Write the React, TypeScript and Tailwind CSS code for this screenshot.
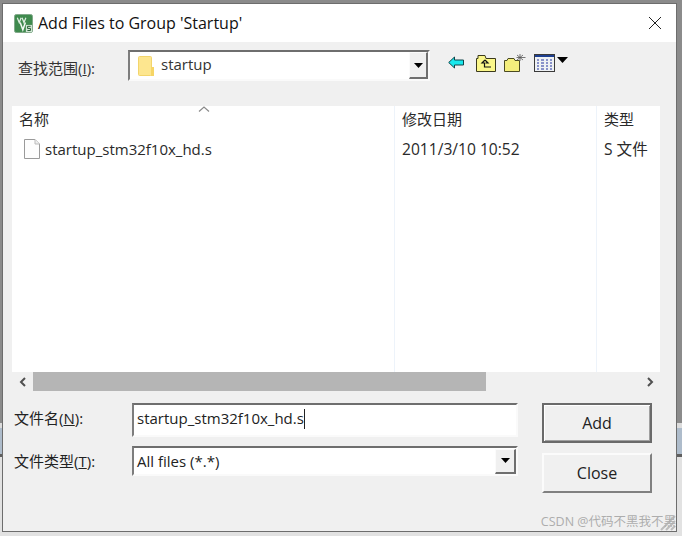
import React from "react";

const ui = "font-['Open_Sans','Noto_Sans_CJK_SC',sans-serif]";

function Logo() {
  return (
    <svg width="19" height="19" viewBox="0 0 20 20" className="shrink-0">
      <rect x="0.5" y="0.5" width="19" height="19" rx="2" fill="#3f8a4e" stroke="#7fa888" />
      <path d="M3.5 4l2 5 2-5M8.5 4l2 5 2-5" stroke="#dfeee2" strokeWidth="1.3" fill="none" />
      <path d="M6.5 9l2.8 7.5L12 9" stroke="#f2f8f3" strokeWidth="1.6" fill="none" />
      <rect x="12.5" y="11.5" width="6.5" height="7.5" fill="#cfe3d3" />
      <path d="M17.5 13h-3.2v2.2h3v2.2h-3.2" stroke="#1f5a2c" strokeWidth="1" fill="none" />
    </svg>
  );
}

function Triangle({ w = 9, h = 5 }: { w?: number; h?: number }) {
  return (
    <svg width={w} height={h} viewBox={`0 0 ${w} ${h}`}>
      <path d={`M0 0H${w}L${w / 2} ${h}Z`} fill="#000" />
    </svg>
  );
}

function Sunken({ className, children }: { className: string; children?: React.ReactNode }) {
  return (
    <div className={`border-2 border-t-[#6e6e6e] border-l-[#7d7d7d] border-r-[#fafafa] border-b-[#fafafa] bg-white ${className}`}>
      {children}
    </div>
  );
}

function DropButton({ className }: { className: string }) {
  return (
    <div className={`flex items-center justify-center bg-[#f0f0f0] border border-t-[#fbfbfb] border-l-[#fbfbfb] border-r-[#6f6f6f] border-b-[#6f6f6f] border-r-2 border-b-2 ${className}`}>
      <Triangle />
    </div>
  );
}

function Toolbar() {
  return (
    <div className="flex items-center ml-[18px] h-[24px] mt-[-6px]">
      <svg width="16" height="13" viewBox="0 0 16 13" className="mr-[12px]">
        <path d="M0.7 6.5L6.5 1V4H15.5V9H6.5V12Z" fill="#18e8ec" stroke="#10454a" strokeWidth="1" />
      </svg>
      <svg width="20" height="18" viewBox="0 0 20 18" className="mr-[8px]">
        <path d="M0.5 4.5H2V1.5H9L10 4.5H19.5V17.5H0.5Z" fill="#fbf78a" stroke="#3b3a1c" />
        <path d="M9 6L6 9H8.5V13H15M9 6l3 3H9.5" stroke="#111" strokeWidth="1.2" fill="none" />
      </svg>
      <svg width="22" height="18" viewBox="0 0 22 18" className="mr-[8px]">
        <path d="M0.5 6.5H3L4 4.5H10L11 6.5H15.5V17.5H0.5Z" fill="#f4ee7c" stroke="#4a4a22" />
        <path d="M16 0V7M12.5 3.5H21.5M13 1l6 5M19 1l-6 5" stroke="#555" strokeWidth="0.8" />
      </svg>
      <svg width="21" height="18" viewBox="0 0 21 18" className="mr-[2px]">
        <rect x="0.5" y="0.5" width="20" height="17" fill="#eef1f4" stroke="#3a3a3a" />
        <rect x="1" y="1" width="19" height="2" fill="#1d3f90" />
        <path d="M3 6h2M7 6h3M12 6h2M16 6h2M3 9h2M7 9h3M12 9h2M16 9h2M3 12h2M7 12h3M12 12h2M16 12h2M3 15h2M7 15h3M12 15h2M16 15h2" stroke="#2335a0" strokeWidth="1.2" />
      </svg>
      <div className="mb-[5px]">
        <Triangle w={11} h={6} />
      </div>
    </div>
  );
}

function FileList() {
  const sep = "w-px shrink-0 bg-[#edf3fa]";
  return (
    <div className="mx-[8px] mt-[25px] w-[648px] h-[266px] bg-white flex text-[15px] text-[#2a2a2a] relative overflow-hidden">
      <div className="w-[382px] pl-[7px] pt-[2px]">
        <div className="h-[22px] leading-[22px]">名称</div>
        <div className="flex items-center gap-[5px] mt-[9px] pl-[5px] h-[20px]">
          <svg width="16" height="20" viewBox="0 0 16 20">
            <path d="M0.5 0.5H11L15.5 5V19.5H0.5Z" fill="#fdfdfd" stroke="#9a9a9a" />
            <path d="M11 0.5V5H15.5" fill="#eee" stroke="#bbb" />
          </svg>
          <span>startup_stm32f10x_hd.s</span>
        </div>
      </div>
      <div className={sep} />
      <div className="w-[201px] pl-[7px] pt-[2px]">
        <div className="h-[22px] leading-[22px]">修改日期</div>
        <div className="mt-[9px] h-[20px] leading-[20px] text-[15.6px]">2011/3/10 10:52</div>
      </div>
      <div className={sep} />
      <div className="flex-1 pl-[7px] pt-[2px]">
        <div className="h-[22px] leading-[22px]">类型</div>
        <div className="mt-[9px] h-[20px] leading-[20px] text-[15.6px]">S 文件</div>
      </div>
      <svg width="12" height="6" viewBox="0 0 12 6" className="absolute left-[186px] top-0">
        <path d="M1 5.5L6 1L11 5.5" stroke="#8a8a8a" strokeWidth="1.2" fill="none" />
      </svg>
    </div>
  );
}

function ScrollBar() {
  return (
    <div className="mx-[8px] w-[648px] h-[19px] flex items-center">
      <div className="w-[21px] flex justify-center">
        <svg width="8" height="10" viewBox="0 0 8 10">
          <path d="M6 1L2 5L6 9" stroke="#505050" strokeWidth="2" fill="none" />
        </svg>
      </div>
      <div className="w-[453px] h-[19px] bg-[#b5b5b5]" />
      <div className="flex-1" />
      <div className="w-[21px] flex justify-center">
        <svg width="8" height="10" viewBox="0 0 8 10">
          <path d="M2 1L6 5L2 9" stroke="#505050" strokeWidth="2" fill="none" />
        </svg>
      </div>
    </div>
  );
}

function Form() {
  return (
    <div className="flex mt-[12px] ml-[10px]">
      <div className="w-[118px] text-[15px] text-[#222]">
        <div className="h-[34px] leading-[30px]">
          文件名(<span className="underline">N</span>):
        </div>
        <div className="h-[30px] mt-[9px] leading-[30px]">
          文件类型(<span className="underline">T</span>):
        </div>
      </div>
      <div className="w-[386px] text-[15px] text-[#222]">
        <Sunken className="h-[34px] pl-[3px] flex items-center">
          <span className="mb-[4px]">startup_stm32f10x_hd.s</span>
          <span className="w-px h-[20px] mb-[2px] bg-[#222]" />
        </Sunken>
        <Sunken className="h-[30px] mt-[9px] pl-[3px] flex items-center justify-between">
          <span className="leading-[24px]">All files (*.*)</span>
          <DropButton className="w-[21px] h-[25px]" />
        </Sunken>
      </div>
      <div className="ml-[24px] w-[110px] text-[16px] text-[#222]">
        <button className="w-full h-[40px] flex items-center justify-center bg-[#f0f0f0] border-2 border-[#6a6a6a] shadow-[inset_1px_1px_0_#ffffff,inset_-1px_-1px_0_#a0a0a0]">
          Add
        </button>
        <button className="w-full h-[40px] mt-[10px] flex items-center justify-center bg-[#f0f0f0] border-2 border-t-[#fbfbfb] border-l-[#fbfbfb] border-r-[#808080] border-b-[#808080]">
          Close
        </button>
      </div>
    </div>
  );
}

function Dialog() {
  return (
    <div className={`w-[675px] h-[529px] border border-[#6d6d6d] pl-px bg-[#f0f0f0] flex flex-col relative overflow-hidden ${ui}`}>
      <div className="h-[38px] -ml-px bg-white flex items-center pl-[11px] pr-[14px] shrink-0">
        <Logo />
        <div className="ml-[5px] text-[16px] text-[#111]">Add Files to Group 'Startup'</div>
        <svg width="14" height="14" viewBox="0 0 14 14" className="ml-auto">
          <path d="M1 1L13 13M13 1L1 13" stroke="#222" strokeWidth="1" />
        </svg>
      </div>
      <div className="flex items-center mt-[8px] pl-[14px] h-[31px]">
        <div className="w-[110px] text-[15px] text-[#333] mt-[6px]">
          查找范围(<span className="underline">I</span>):
        </div>
        <Sunken className="w-[302px] h-[31px] flex items-center pl-[8px] text-[15px] text-[#333]">
          <svg width="16" height="20" viewBox="0 0 16 20" className="mr-[7px]">
            <rect x="0.5" y="0.5" width="13" height="19" rx="1" fill="#fde68f" stroke="#f3d56c" />
            <rect x="13" y="11" width="3" height="9" fill="#f6d566" />
          </svg>
          <span className="mb-[2px]">startup</span>
          <DropButton className="ml-auto w-[19px] h-[27px]" />
        </Sunken>
        <Toolbar />
      </div>
      <FileList />
      <ScrollBar />
      <Form />
      <svg width="18" height="18" viewBox="0 0 18 18" className="absolute right-0 bottom-0">
        <path d="M17 3L3 17M17 8L8 17M17 13L13 17" stroke="#bdbdbd" strokeWidth="2" />
      </svg>
      <div className="absolute right-[0px] bottom-[1px] text-[12.5px] leading-[16px] text-[#adadad] whitespace-nowrap">
        CSDN @代码不黑我不黑
      </div>
    </div>
  );
}

function SideStrip({ className }: { className: string }) {
  return (
    <div className={`flex flex-col shrink-0 ${className}`}>
      <div className="h-[420px] bg-[#8b8b8b]" />
      <div className="h-[5px] bg-[#dcdcdc]" />
      <div className="h-[26px] bg-[#aebccb]" />
      <div className="h-[3px] bg-[#5f5f5f]" />
      <div className="flex-1 bg-[#e2e2e2]" />
    </div>
  );
}

export default function App() {
  return (
    <div className="w-[682px] h-[536px] flex flex-col bg-[#e2e2e2] overflow-hidden">
      <div className="h-[3px] bg-[#8b8b8b] shrink-0" />
      <div className="flex flex-1">
        <SideStrip className="w-[2px]" />
        <Dialog />
        <SideStrip className="w-[5px]" />
      </div>
    </div>
  );
}
